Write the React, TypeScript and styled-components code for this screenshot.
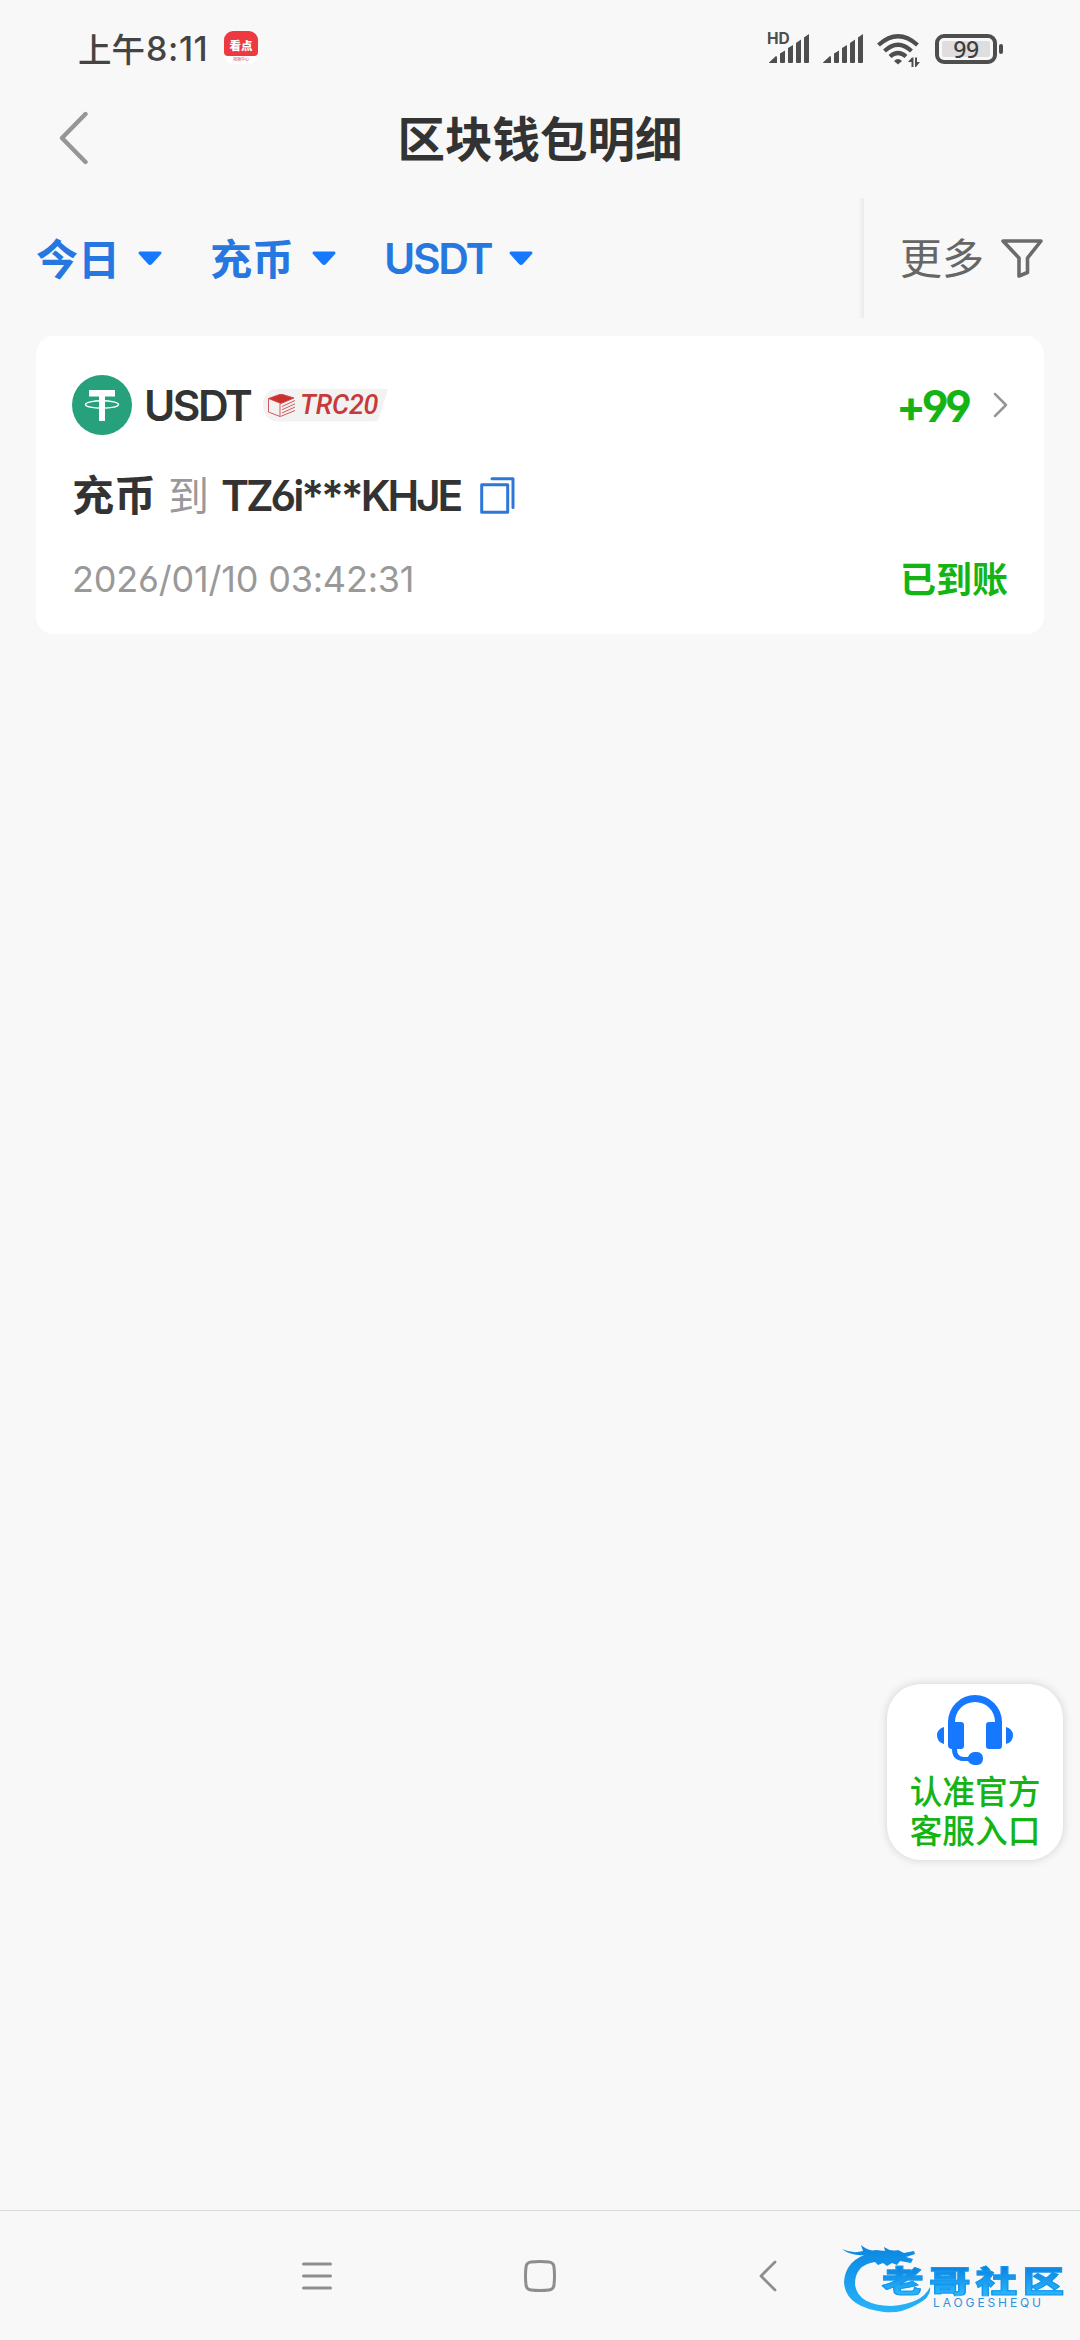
import React from 'react'
import styled, { createGlobalStyle } from 'styled-components'

const App = () => (
  <Screen>
    <GlobalStyle />
    <StatusBar>
      <Clock>
        上午<ClockDigits>8:11</ClockDigits>
      </Clock>
      <AppBadge>
        <AppBadgeTop>看点</AppBadgeTop>
        <AppBadgeBottom>视频中心</AppBadgeBottom>
      </AppBadge>
      <StatusIcons>
        <Signal hd />
        <Signal />
        <WifiIcon />
        <BatteryIcon />
      </StatusIcons>
    </StatusBar>
    <Header>
      <BackButton>
        <svg width="30" height="54" viewBox="0 0 30 54" fill="none">
          <path d="M26.5 3L3 27L26.5 51" stroke="#969696" strokeWidth="4.4" strokeLinecap="round" strokeLinejoin="round" />
        </svg>
      </BackButton>
      <Title>区块钱包明细</Title>
    </Header>
    <FilterBar>
      {filters.map((f) => (
        <Filter key={f.label} gap={f.gap}>
          {f.latin ? <FilterLatin>{f.label}</FilterLatin> : <FilterLabel>{f.label}</FilterLabel>}
          <Caret />
        </Filter>
      ))}
      <More>
        <MoreLabel>更多</MoreLabel>
        <svg width="42" height="39" viewBox="0 0 42 39" fill="none">
          <path d="M2 2H40L26.5 19V33.5L18 37V19Z" stroke="#6b6b6b" strokeWidth="3.6" strokeLinejoin="round" />
        </svg>
      </More>
    </FilterBar>
    <Card>
      <Row height={60}>
        <TetherIcon />
        <Coin>USDT</Coin>
        <Chain>
          <CubeIcon />
          <ChainName>TRC20</ChainName>
        </Chain>
        <Amount>+99</Amount>
        <svg width="15" height="26" viewBox="0 0 15 26" fill="none">
          <path d="M2 2L13 13L2 24" stroke="#969696" strokeWidth="2.5" strokeLinecap="round" strokeLinejoin="round" />
        </svg>
      </Row>
      <Row height={120}>
        <Kind>充币</Kind>
        <To>到</To>
        <Address>TZ6i***KHJE</Address>
        <svg width="35" height="37" viewBox="0 0 35 37" fill="none" stroke="#2f77d6" strokeWidth="3" strokeLinecap="round" strokeLinejoin="round">
          <rect x="1.7" y="7.7" width="26" height="27.5" />
          <path d="M12 1.7H33V30.5" />
        </svg>
      </Row>
      <Row height={48}>
        <DateText>2026/01/10 03:42:31</DateText>
        <State>已到账</State>
      </Row>
    </Card>
    <ServiceButton>
      <HeadsetIcon />
      <ServiceText>
        认准官方
        <br />
        客服入口
      </ServiceText>
    </ServiceButton>
    <NavBar>
      <svg width="30" height="28" viewBox="0 0 30 28" stroke="#8e8e8e" strokeWidth="3" strokeLinecap="round">
        <path d="M1.5 2H28.5M1.5 14H28.5M1.5 26H28.5" />
      </svg>
      <svg width="32" height="32" viewBox="0 0 32 32" fill="none" stroke="#8e8e8e" strokeWidth="3">
        <path d="M7 2Q16 1 25 2Q29.5 2.5 30 7Q31 16 30 25Q29.5 29.5 25 30Q16 31 7 30Q2.5 29.5 2 25Q1 16 2 7Q2.5 2.5 7 2Z" />
      </svg>
      <svg width="18" height="32" viewBox="0 0 18 32" fill="none">
        <path d="M16 2L2 16L16 30" stroke="#8e8e8e" strokeWidth="2.8" strokeLinecap="round" strokeLinejoin="round" />
      </svg>
    </NavBar>
    <Watermark>
      <DragonIcon />
      <WatermarkName>老哥社区</WatermarkName>
      <WatermarkLatin>LAOGESHEQU</WatermarkLatin>
    </Watermark>
  </Screen>
)

const filters = [
  { label: '今日', gap: 48 },
  { label: '充币', gap: 47 },
  { label: 'USDT', gap: 0, latin: true },
]

const Signal = ({ hd }: { hd?: boolean }) => (
  <SignalBox>
    {hd ? <HdLabel>HD</HdLabel> : undefined}
    <svg width="41" height="30" viewBox="0 0 41 30" fill="#4e4e4e">
      <path d="M0 28.5L7 22Q8 22 8 23.5V29H1Q0 29 0 28.5Z" />
      <path d="M11 19.5L16 16.5V28Q16 29 15 29H12Q11 29 11 28Z" />
      <path d="M19 14L24 11V28Q24 29 23 29H20Q19 29 19 28Z" />
      <path d="M27 9L32 5.5V28Q32 29 31 29H28Q27 29 27 28Z" />
      <path d="M35 3.5L40 0V28Q40 29 39 29H36Q35 29 35 28Z" />
    </svg>
  </SignalBox>
)

const WifiIcon = () => (
  <svg width="44" height="34" viewBox="0 0 44 34" fill="none" stroke="#4e4e4e" strokeWidth="4.2">
    <path d="M1.5 11Q21 -6.5 40.5 11" />
    <path d="M7.5 17Q21 4.5 34.5 17" />
    <path d="M13 22.5Q21 15.5 29 22.5" />
    <path d="M17 27Q21 23 25 27L21 30.5Z" fill="#4e4e4e" stroke="none" />
    <path d="M31 28L35 23.5H36.5V33H34.5V28ZM38 23.5H40V28H43L39 33H38Z" fill="#4e4e4e" stroke="none" />
  </svg>
)

const BatteryIcon = () => (
  <Battery>
    <BatteryBody>
      <BatteryLevel>99</BatteryLevel>
    </BatteryBody>
    <BatteryTip />
  </Battery>
)

const Caret = () => (
  <svg width="24" height="15" viewBox="0 0 24 15" fill="#1677ff">
    <path d="M2 0.5H22Q24.5 1 23 3L14 13Q12 15 10 13L1 3Q-0.5 1 2 0.5Z" />
  </svg>
)

const TetherIcon = () => (
  <svg width="60" height="60" viewBox="0 0 60 60" fill="none">
    <circle cx="30" cy="30" r="30" fill="#26a17b" />
    <path d="M17 15H43V21.5H33V46H27V21.5H17Z" fill="#fff" />
    <ellipse cx="30" cy="29.5" rx="16.5" ry="3.8" stroke="#fff" strokeWidth="1.4" />
  </svg>
)

const CubeIcon = () => (
  <svg width="28" height="23" viewBox="0 0 28 23" fill="none" stroke="#cf4646" strokeWidth="0.9">
    <path d="M0.5 4.5L13 0L26 4L13 9.5Z" fill="#cc2f2f" />
    <path d="M0.5 5V18L12 22.5V9.5M14 12.5L27 6.5M14 15.8L27 9.8M14 19L27 13M12.5 22.5L27 16.5" />
  </svg>
)

const HeadsetIcon = () => (
  <svg width="76" height="70" viewBox="0 0 76 70" fill="#1677ff">
    <path d="M11 50V27A27 27 0 0 1 65 27V51Q65 54 62 54H52Q49 54 49 51V30Q49 27 52 27H58A20 20 0 0 0 18 27H24Q27 27 27 30V51Q27 54 24 54H20Q20 62 27 62H31Q33 57 38 57H40Q46 57.5 46 63.5Q46 69.5 40 70H37Q33 69.5 31 66H26Q15 65.5 15 54Q11 54 11 50Z" />
    <path d="M7 32V49Q0 47 0 40.5Q0 34 7 32ZM69 32V49Q76 47 76 40.5Q76 34 69 32Z" />
  </svg>
)

const DragonIcon = () => (
  <Dragon width="92" height="70" viewBox="0 0 92 70">
    <defs>
      <linearGradient id="dragon" x1="0" y1="0" x2="0" y2="1">
        <stop offset="0" stopColor="#0a86e0" />
        <stop offset="1" stopColor="#27b4fa" />
      </linearGradient>
    </defs>
    <path
      d="M0 4Q11 9 21 6L19 0Q27 7 34 5L43 6L42 2Q49 7 56 5L62 8L72 6L73 9L64 12L71 14L69 18L58 16L55 20L50 18L45 21L41 18L36 20L33 17Q13 20 13 39Q15 60 49 61Q80 59 88 42Q90 52 74 60Q58 69 42 67Q3 62 2 37Q3 18 22 10Q9 11 0 4Z"
      fill="url(#dragon)"
    />
  </Dragon>
)

const sans = `'Inter', 'Noto Sans CJK SC', sans-serif`
const green = '#14b414'

const GlobalStyle = createGlobalStyle`
  body {
    margin: 0;
    background: #f8f8f8;
  }
  svg {
    flex-shrink: 0;
    display: block;
  }
`
const Screen = styled.div`
  position: relative;
  display: flex;
  flex-direction: column;
  width: 1080px;
  height: 2340px;
  overflow: hidden;
  background: #f8f8f8;
  color: #333;
  font-family: 'Noto Sans CJK SC', sans-serif;
  white-space: nowrap;
`
const StatusBar = styled.div`
  display: flex;
  align-items: center;
  height: 97px;
  box-sizing: border-box;
  padding: 0 77px 0 78px;
`
const Clock = styled.div`
  display: flex;
  align-items: center;
  width: 146px;
  padding-bottom: 2px;
  color: #444;
  font-size: 33.5px;
  font-weight: 500;
  line-height: 40px;
`
const ClockDigits = styled.span`
  margin-left: 1px;
  padding-top: 2px;
  font-family: ${sans};
  font-size: 34px;
  letter-spacing: 0.6px;
`
const AppBadge = styled.div`
  width: 34px;
  height: 33px;
  margin-bottom: 2px;
  border-radius: 9px;
  background: #fff;
  overflow: hidden;
  text-align: center;
`
const AppBadgeTop = styled.div`
  height: 25px;
  border-radius: 0 0 4px 4px;
  background: #ed3a40;
  color: #fff;
  font-size: 11.5px;
  font-weight: 900;
  line-height: 28px;
`
const AppBadgeBottom = styled.div`
  color: #d8404c;
  font-size: 4px;
  line-height: 7px;
`
const StatusIcons = styled.div`
  display: flex;
  align-items: center;
  gap: 14px;
  margin-left: auto;
  & > svg {
    margin-top: 4px;
  }
`
const SignalBox = styled.div`
  position: relative;
  width: 40px;
  height: 30px;
`
const HdLabel = styled.span`
  position: absolute;
  left: -2px;
  top: -3px;
  color: #4e4e4e;
  font: 700 15.5px/15px ${sans};
`
const Battery = styled.div`
  display: flex;
  align-items: center;
  gap: 2px;
`
const BatteryBody = styled.div`
  width: 62px;
  height: 30px;
  box-sizing: border-box;
  padding: 3px;
  border: 4px solid #4e4e4e;
  border-radius: 9px;
`
const BatteryLevel = styled.div`
  height: 16px;
  border-radius: 2px;
  background: #dedede;
  color: #3e3e3e;
  text-align: center;
  font: 500 23px/17px 'Noto Sans', sans-serif;
  letter-spacing: -0.5px;
`
const BatteryTip = styled.div`
  width: 4px;
  height: 10px;
  border-radius: 2px;
  background: #4e4e4e;
`
const Header = styled.div`
  display: grid;
  grid-template-columns: 200px 1fr 200px;
  align-items: center;
  height: 82px;
  margin-bottom: 2px;
`
const BackButton = styled.div`
  padding-left: 59px;
`
const Title = styled.div`
  padding-bottom: 2px;
  text-align: center;
  font-size: 47.5px;
  font-weight: 700;
  line-height: 60px;
`
const FilterBar = styled.div`
  display: flex;
  align-items: center;
  height: 120px;
  margin-top: 17px;
  padding-left: 36px;
`
const Filter = styled.div<{ gap: number }>`
  display: flex;
  align-items: center;
  gap: 18px;
  margin-right: ${(props) => props.gap}px;
  color: #2777e0;
  font-size: 42px;
  font-weight: 700;
`
const FilterLabel = styled.span`
  padding-bottom: 4px;
`
const FilterLatin = styled.span`
  padding: 2px 0 0 1px;
  font: 600 42.5px/60px ${sans};
  letter-spacing: -2.3px;
`
const More = styled.div`
  display: flex;
  align-items: center;
  gap: 17px;
  width: 222px;
  height: 120px;
  box-sizing: border-box;
  margin-left: auto;
  padding-left: 42px;
  background: linear-gradient(to right, #f8f8f8, #eaeaea 6px, #f8f8f8 6px);
  color: #666;
  font-size: 42px;
`
const MoreLabel = styled.span`
  padding-bottom: 5px;
`
const Card = styled.div`
  height: 298px;
  box-sizing: border-box;
  margin: 18px 36px 0;
  padding: 39px 36px 0;
  border-radius: 18px;
  background: #fff;
`
const Row = styled.div<{ height: number }>`
  display: flex;
  align-items: center;
  height: ${(props) => props.height}px;
`
const Coin = styled.div`
  width: 119px;
  margin-left: 12px;
  padding-top: 2px;
  font: 600 42.5px/60px ${sans};
  letter-spacing: -2.5px;
`
const Chain = styled.div`
  display: flex;
  align-items: center;
  width: 125px;
  height: 33px;
  box-sizing: border-box;
  padding-left: 5px;
  gap: 4px;
  border-radius: 14px 0 18px 16px;
  background: #f3f2f3;
  clip-path: polygon(0 0, 100% 0, 92% 100%, 0 100%);
`
const ChainName = styled.span`
  color: #c63a3a;
  font: italic 500 27px/33px Roboto, sans-serif;
  letter-spacing: -0.2px;
`
const Amount = styled.div`
  margin: 0 25px 0 auto;
  padding-top: 2px;
  color: ${green};
  font: 700 43.5px/60px ${sans};
  font-feature-settings: 'cv03', 'cv04';
  letter-spacing: -3.6px;
`
const Kind = styled.div`
  width: 96px;
  padding-bottom: 5px;
  font-size: 42px;
  font-weight: 700;
`
const To = styled.div`
  width: 53px;
  padding-bottom: 5px;
  color: #999;
  font-size: 41px;
`
const Address = styled.div`
  width: 259px;
  padding-top: 2px;
  font: 600 42.5px/60px ${sans};
  font-feature-settings: 'cv03', 'cv04';
  letter-spacing: -3.1px;
`
const DateText = styled.div`
  color: #999;
  font: 400 36px/48px ${sans};
  font-feature-settings: 'cv03', 'cv04';
  letter-spacing: -0.2px;
`
const State = styled.div`
  margin-left: auto;
  padding-bottom: 5px;
  color: ${green};
  font-size: 36px;
  font-weight: 700;
`
const ServiceButton = styled.div`
  position: absolute;
  left: 887px;
  top: 1684px;
  display: flex;
  flex-direction: column;
  align-items: center;
  gap: 5px;
  width: 176px;
  height: 176px;
  box-sizing: border-box;
  padding-top: 11px;
  border-radius: 34px;
  background: #fff;
  box-shadow: 0 0 10px rgba(0, 0, 0, 0.16);
`
const ServiceText = styled.div`
  color: ${green};
  font-size: 32.7px;
  font-weight: 500;
  line-height: 39px;
`
const NavBar = styled.div`
  display: grid;
  grid-template-columns: 222px 235px auto;
  align-items: center;
  height: 130px;
  box-sizing: border-box;
  margin-top: auto;
  padding-left: 302px;
  border-top: 1px solid #dadcda;
`
const Watermark = styled.div`
  position: absolute;
  left: 842px;
  top: 2245px;
  width: 224px;
  height: 70px;
`
const Dragon = styled.svg`
  position: absolute;
  left: 0;
  top: 0;
`
const WatermarkName = styled.div`
  position: absolute;
  left: 40px;
  top: 18px;
  font-size: 30px;
  font-weight: 900;
  line-height: 32px;
  letter-spacing: 4px;
  transform: scaleX(1.38);
  transform-origin: left;
  background: linear-gradient(#0b84e2 15%, #27b2fa 90%);
  -webkit-background-clip: text;
  color: transparent;
  -webkit-text-stroke: 1px #1597ec;
`
const WatermarkLatin = styled.div`
  position: absolute;
  left: 91px;
  top: 51px;
  color: #2a93e0;
  font: 400 12px/13px ${sans};
  letter-spacing: 2.9px;
`

export default App
